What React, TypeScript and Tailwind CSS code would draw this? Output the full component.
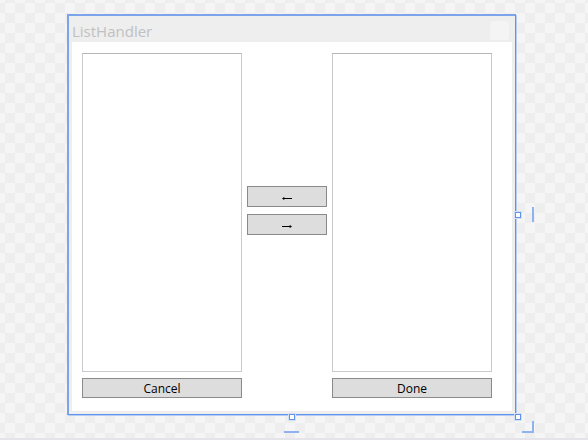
import React from "react";

const buttonClass =
  "flex w-full items-center justify-center border border-[#8a8a8a] bg-[#dddddd] pt-px text-xs leading-[18px] text-black";
const listClass =
  "block h-full w-full appearance-none overflow-hidden rounded-none border border-[#c9cacd] border-t-[#b5b6b9] bg-white bg-none p-0 outline-none";
const handleClass =
  "absolute size-[6px] border border-[#5f92ea] bg-white shadow-[0_0_0_1px_#d3e1fa]";

function LeftArrow() {
  return (
    <svg width="10" height="5" viewBox="0 0 10 5" aria-hidden="true" className="mt-[3px]">
      <path d="M0 2.5 2.5 .8 2 2.5 2.5 4.2Z" fill="#000" />
      <path d="M1 2.5h9" stroke="#000" strokeWidth="1" />
    </svg>
  );
}

function RightArrow() {
  return (
    <svg width="10" height="5" viewBox="0 0 10 5" aria-hidden="true" className="mt-[3px]">
      <path d="M10 2.5 7.5 .8 8 2.5 7.5 4.2Z" fill="#000" />
      <path d="M0 2.5h9" stroke="#000" strokeWidth="1" />
    </svg>
  );
}

function ResizeAdorners() {
  return (
    <div aria-hidden="true">
      <span className={`${handleClass} -right-[6px] top-1/2 -mt-[3px]`} />
      <span className="absolute -right-[19px] top-1/2 -mt-2 h-[15px] w-[2px] bg-[#8fb2f0]" />
      <span className={`${handleClass} -bottom-[6px] left-1/2 -ml-[3px]`} />
      <span className="absolute -bottom-[19px] left-1/2 -ml-2 h-[2px] w-[15px] bg-[#8fb2f0]" />
      <span className={`${handleClass} -bottom-[6px] -right-[6px]`} />
      <span className="absolute -bottom-[19px] -right-[19px] size-3 border-b-2 border-r-2 border-[#8fb2f0]" />
    </div>
  );
}

export default function App() {
  return (
    <main className="flex min-h-screen flex-col border-b-2 border-[#e4e4ea] bg-[#f5f5f5] bg-[conic-gradient(#eeeeee_25%,#f5f5f5_0_50%,#eeeeee_0_75%,#f5f5f5_0)] bg-[length:20px_20px] bg-[position:5px_3px] pt-[14px] pr-[72px] pb-[23px] pl-[67px] font-['Open_Sans','Noto_Sans',sans-serif]">
      <section className="relative flex grow flex-col border-t-2 border-r border-b border-l-2 border-[#7ba4ea] border-r-[#5f92ea] border-b-[#5f92ea] bg-[#eeeeee] px-[3px] pb-[3px] shadow-[1px_1px_0_#b7cdf5]">
        <header className="flex h-[26px] items-center justify-between">
          <h1 className="pt-[3px] text-[15px] leading-5 text-[#bfc0c2]">ListHandler</h1>
          <button type="button" aria-label="Close" className="mt-[2px] mr-[3px] size-[19px] rounded-[3px] bg-[#f4f4f4]" />
        </header>
        <div className="grid grow grid-cols-[2fr_1fr_2fr] grid-rows-[1fr_20px] gap-x-[5px] gap-y-[6px] bg-white pt-[11px] pr-5 pb-[13px] pl-[10px]">
          <select multiple aria-label="Left list" className={listClass} />
          <div className="flex flex-col justify-center gap-[7px] pb-[5px]">
            <button type="button" aria-label="Move left" className={`${buttonClass} h-[21px]`}>
              <LeftArrow />
            </button>
            <button type="button" aria-label="Move right" className={`${buttonClass} h-[21px]`}>
              <RightArrow />
            </button>
          </div>
          <select multiple aria-label="Right list" className={listClass} />
          <button type="button" className={buttonClass}>Cancel</button>
          <button type="button" className={`${buttonClass} col-start-3`}>Done</button>
        </div>
        <ResizeAdorners />
      </section>
    </main>
  );
}
